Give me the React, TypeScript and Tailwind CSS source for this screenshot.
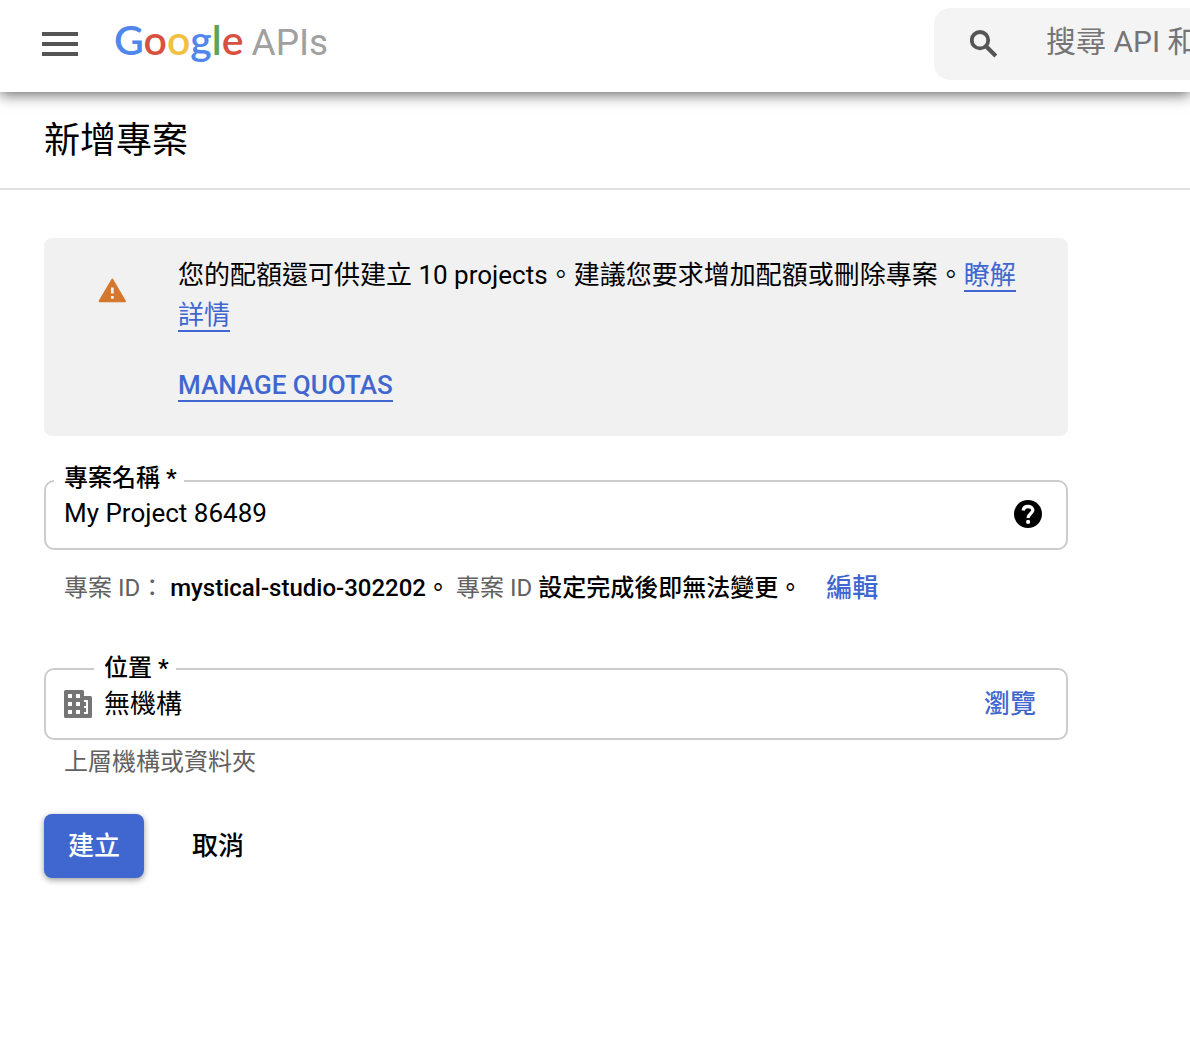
import React from "react";

const letters = [
  { char: "G", color: "text-[#5186ec]" },
  { char: "o", color: "text-[#d85140]" },
  { char: "o", color: "text-[#f1bf42]" },
  { char: "g", color: "text-[#5186ec]" },
  { char: "l", color: "text-[#58a55c]" },
  { char: "e", color: "text-[#d85140]" },
];

function SearchIcon() {
  return (
    <svg viewBox="0 0 28 28" className="size-7 shrink-0" fill="none" stroke="#555" aria-hidden="true">
      <circle cx="10" cy="10.200" r="8.200" strokeWidth="3.800" />
      <path d="M16 16.200 25.800 26" strokeWidth="4.200" />
    </svg>
  );
}

function WarningIcon() {
  return (
    <svg viewBox="0 0 28 25" className="mt-[23px] h-[25px] w-7 shrink-0" aria-hidden="true">
      <path d="M14.300 1.500 27 23.300H1.500Z" fill="#d5782d" stroke="#d5782d" strokeWidth="1.800" strokeLinejoin="round" />
      <path d="M13 9.500h2.700v6h-2.700zM13 18h2.700v2.800h-2.700z" fill="#f1f1f1" />
    </svg>
  );
}

function HelpIcon() {
  return (
    <svg viewBox="0 0 28 28" className="size-7 shrink-0" aria-hidden="true">
      <circle cx="14" cy="14" r="14" fill="#000" />
      <path
        d="M9.200 10.500C9.500 7.900 11.500 6.500 14 6.500C16.700 6.500 18.800 8.100 18.800 10.300C18.800 13.400 14.100 13.600 14.100 17.900"
        fill="none"
        stroke="#fff"
        strokeWidth="3.300"
      />
      <circle cx="14.100" cy="21.900" r="2.100" fill="#fff" />
    </svg>
  );
}

function OrganizationIcon() {
  return (
    <svg viewBox="0 0 28 28" className="mt-0.5 size-7 shrink-0" fill="#757575" aria-hidden="true">
      <path
        fillRule="evenodd"
        d="M1.500 0h17Q20 0 20 1.500V6h6.500Q28 6 28 7.500V26.500Q28 28 26.500 28H1.500Q0 28 0 26.500V1.500Q0 0 1.500 0ZM4 4v4h4V4ZM12 4v4h4V4ZM4 12v4h4v-4ZM12 12v4h4v-4ZM4 20v4h4v-4ZM12 20v4h4v-4ZM20 10H24V24H20V22H22V18H20V16H22V12H20Z"
      />
    </svg>
  );
}

export default function App() {
  return (
    <div
      className="min-h-screen bg-white font-['Roboto','Noto_Sans_CJK_TC',sans-serif] text-[26px] text-black"
      lang="zh-Hant"
    >
      <header className="relative flex h-[92px] items-center bg-white pl-[42px] shadow-[0_2px_14px_rgba(0,0,0,0.65)]">
        <button type="button" aria-label="選單" className="mb-1 flex flex-col gap-[6px]">
          <span className="h-1 w-9 bg-[#555]" />
          <span className="h-1 w-9 bg-[#555]" />
          <span className="h-1 w-9 bg-[#555]" />
        </button>
        <a href="#" className="mb-2.5 ml-9 flex items-baseline gap-2 font-['Lato',sans-serif] leading-[52px]">
          <span className="text-[41px] font-semibold">
            {letters.map((letter, i) => (
              <span key={i} className={letter.color}>
                {letter.char}
              </span>
            ))}
          </span>
          <span className="font-['Roboto',sans-serif] text-[37px] text-[#a0a0a0]">APIs</span>
        </a>
        <div className="mb-1 ml-auto flex h-[72px] w-64 items-center overflow-hidden rounded-l-2xl bg-[#f4f4f4] pl-9">
          <SearchIcon />
          <input
            type="text"
            aria-label="搜尋"
            placeholder="搜尋 API 和"
            className="mb-1.5 ml-12 w-60 shrink-0 bg-transparent text-[30px] outline-none placeholder:text-[#757575]"
          />
        </div>
      </header>

      <div className="border-b-2 border-[#e0e0e0] px-11 pt-[23px] pb-[21px]">
        <h1 className="text-[36px] leading-[52px]">新增專案</h1>
      </div>

      <main className="px-11 pt-12">
        <form className="max-w-[1024px]" onSubmit={(e) => e.preventDefault()}>
          <section className="flex gap-[52px] rounded-lg bg-[#f1f1f1] pt-[17px] pr-9 pb-[31px] pl-[54px]">
            <WarningIcon />
            <div className="leading-10">
              <p>
                您的配額還可供建立 10 projects。建議您要求增加配額或刪除專案。
                <a href="#" className="border-b-2 border-[#4067d0] text-[#4067d0]">
                  瞭解詳情
                </a>
              </p>
              <p className="mt-[30px]">
                <a href="#" className="border-b-2 border-[#4067d0] font-medium text-[#4067d0]">
                  MANAGE QUOTAS
                </a>
              </p>
            </div>
          </section>

          <fieldset className="mt-7 min-w-0 rounded-[10px] border-2 border-[#ccc] px-2">
            <legend className="pr-[7px] pb-[6px] pl-[10px] text-2xl leading-7 font-medium">
              <label htmlFor="name">專案名稱 *</label>
            </legend>
            <div className="flex h-[50px] items-start pr-4 pl-[10px]">
              <input
                id="name"
                type="text"
                defaultValue="My Project 86489"
                className="min-w-0 flex-1 bg-transparent leading-[30px] outline-none"
              />
              <button type="button" aria-label="說明" className="pt-0.5">
                <HelpIcon />
              </button>
            </div>
          </fieldset>

          <p className="mt-5 flex items-center pl-5 text-2xl leading-9 whitespace-pre">
            <span className="text-[#616161]">專案 ID： </span>
            <span className="font-medium">mystical-studio-302202。 </span>
            <span className="text-[#616161]">專案 ID </span>
            <span className="font-medium">設定完成後即無法變更。</span>
            <button type="button" className="ml-6 text-[26px] font-medium text-[#4067d0]">
              編輯
            </button>
          </p>

          <fieldset className="mt-12 min-w-0 rounded-[10px] border-2 border-[#ccc] pr-[30px] pl-12">
            <legend className="pr-[7px] pb-0.5 pl-[10px] text-2xl leading-7 font-medium">
              <label htmlFor="location">位置 *</label>
            </legend>
            <div className="-ml-[30px] flex h-[54px] items-start gap-3 pt-1">
              <OrganizationIcon />
              <input
                id="location"
                type="text"
                readOnly
                defaultValue="無機構"
                className="min-w-0 flex-1 bg-transparent leading-8 outline-none"
              />
              <button type="button" className="leading-8 font-medium text-[#4067d0]">
                瀏覽
              </button>
            </div>
          </fieldset>
          <p className="mt-1 pl-5 text-2xl leading-9 text-[#616161]">上層機構或資料夾</p>

          <div className="mt-[34px] flex gap-6 font-medium">
            <button
              type="submit"
              className="h-16 rounded-lg bg-[#4067d0] px-6 text-white shadow-[0_2px_6px_rgba(0,0,0,0.4)]"
            >
              建立
            </button>
            <button type="button" className="h-16 px-6">
              取消
            </button>
          </div>
        </form>
      </main>
    </div>
  );
}
